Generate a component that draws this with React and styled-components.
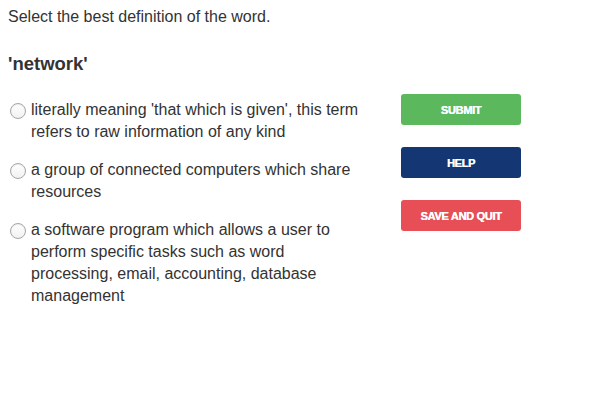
import React from 'react'
import styled, { createGlobalStyle } from 'styled-components'

const GlobalStyle = createGlobalStyle`
    html, body {
        margin: 0;
        padding: 0;
        background: #fff;
    }
    body {
        font-family: "Liberation Sans", Arial, Helvetica, sans-serif;
        color: #333;
    }
`

const Page = styled.div`
    width: 600px;
    height: 400px;
    padding: 8px 8px 0;
    box-sizing: border-box;
`

const Prompt = styled.p`
    margin: 0;
    font-size: 16px;
    line-height: 18px;
`

const Word = styled.h2`
    margin: 27px 0 0;
    font-size: 18.5px;
    line-height: 22px;
    font-weight: bold;
`

const Row = styled.div`
    display: grid;
    grid-template-columns: 393px 120px;
    margin-top: 19px;
`

const Options = styled.ul`
    list-style: none;
    margin: 5px 0 0;
    padding: 0;
    display: flex;
    flex-direction: column;
    gap: 16px;
`

const Option = styled.li`
    display: flex;
    align-items: flex-start;
    gap: 5px;
    padding-left: 2px;
    cursor: pointer;
`

const Radio = styled.span`
    flex: none;
    width: 16px;
    height: 16px;
    margin-top: 4px;
    border-radius: 50%;
    box-sizing: border-box;
    border: 1px solid #a6a6a6;
    background: linear-gradient(#ffffff, #f1f1f1);
    box-shadow: inset 0 1px 1px rgba(0, 0, 0, 0.08);
`

const Label = styled.span`
    max-width: 335px;
    font-size: 16px;
    line-height: 22px;
`

const Actions = styled.div`
    display: flex;
    flex-direction: column;
    gap: 22px;
`

const colors = {
    submit: '#5cb85c',
    help: '#143773',
    quit: '#e84e55',
}

const Button = styled.button`
    width: 120px;
    height: 31px;
    border: none;
    border-radius: 3px;
    background: ${p => colors[p.$kind]};
    color: #fff;
    font-family: "Liberation Sans", Arial, sans-serif;
    font-weight: bold;
    font-size: 11px;
    letter-spacing: -0.3px;
    text-transform: uppercase;
    text-shadow: 0.3px 0 0 #fff;
    cursor: pointer;
    padding: 0;
`

const answers = [
    "literally meaning 'that which is given', this term refers to raw information of any kind",
    'a group of connected computers which share resources',
    'a software program which allows a user to perform specific tasks such as word processing, email, accounting, database management',
]

const App = () => {
    return (
        <Page>
            <GlobalStyle />
            <Prompt>Select the best definition of the word.</Prompt>
            <Word>'network'</Word>
            <Row>
                <Options>
                    {answers.map((text, i) => (
                        <Option key={i}>
                            <Radio />
                            <Label>{text}</Label>
                        </Option>
                    ))}
                </Options>
                <Actions>
                    <Button $kind="submit">Submit</Button>
                    <Button $kind="help">Help</Button>
                    <Button $kind="quit">Save and Quit</Button>
                </Actions>
            </Row>
        </Page>
    )
}

export default App
